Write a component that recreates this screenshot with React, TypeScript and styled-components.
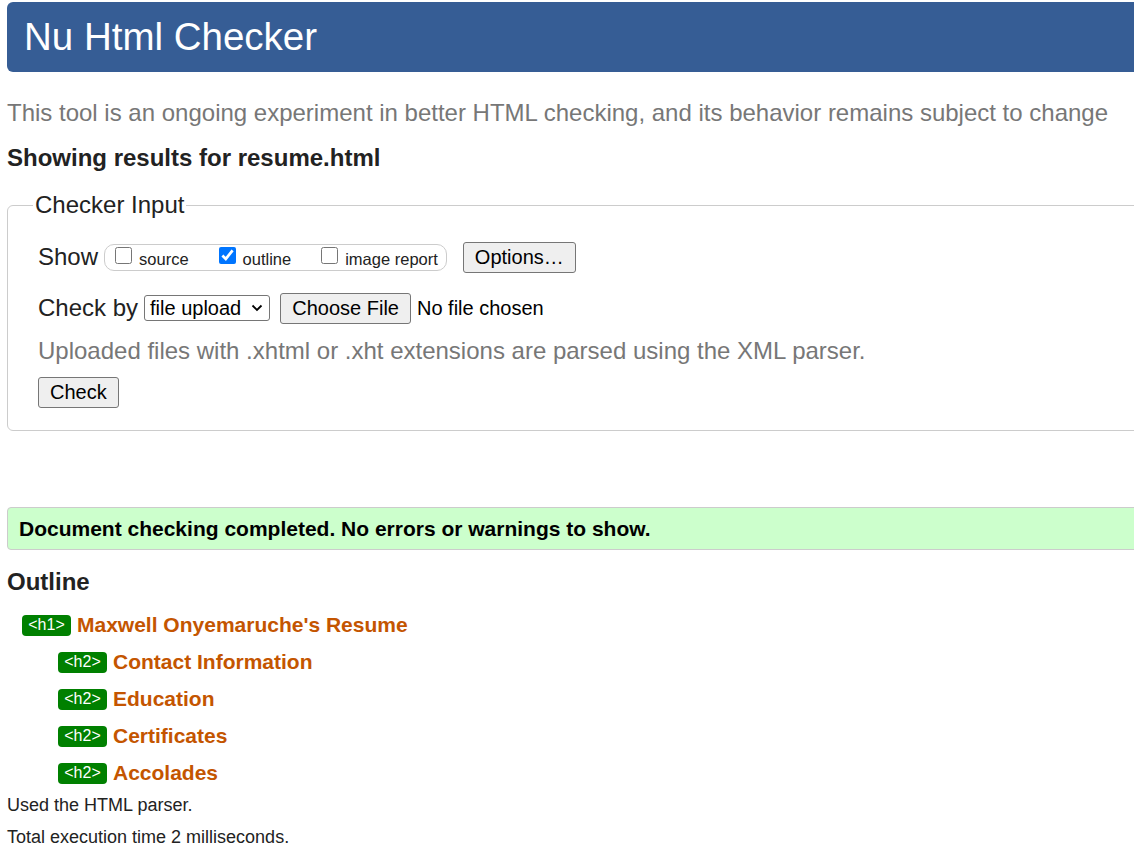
import React from "react";
import styled, { createGlobalStyle } from "styled-components";

const Global = createGlobalStyle`
  html, body { margin: 0; padding: 0; overflow: hidden; background: #fff; }
  body { font-family: "Liberation Sans", Arial, sans-serif; color: #222; }
`;

const Page = styled.div`
  width: 1200px;
  padding: 2px 0 0 7px;
`;

const Banner = styled.h1`
  margin: 0;
  height: 70px;
  display: flex;
  align-items: center;
  padding: 0 17px;
  background: #365d95;
  color: #fff;
  font-size: 38.5px;
  font-weight: normal;
  border-radius: 6px;
`;

const Intro = styled.p`
  margin: 26px 0 0;
  font-size: 24px;
  color: #777;
  line-height: 30px;
  white-space: nowrap;
`;

const Heading = styled.h2<{ $mt: number }>`
  margin: ${(p) => p.$mt}px 0 0;
  font-size: 24px;
  line-height: 30px;
  font-weight: bold;
  color: #222;
`;

const Fieldset = styled.fieldset`
  margin: 19px 0 0;
  padding: 23px 30px 22px;
  border: 1px solid #ccc;
  border-radius: 6px;
  min-width: 0;
`;

const Legend = styled.legend`
  font-size: 24px;
  padding: 0 2px;
  margin-left: -5px;
  color: #222;
  line-height: 26px;
`;

const Row = styled.div<{ $mt?: number }>`
  display: flex;
  align-items: center;
  gap: 6px;
  margin-top: ${(p) => p.$mt ?? 0}px;
  font-size: 24px;
  color: #222;
  min-height: 32px;
`;

const CheckGroup = styled.div`
  display: flex;
  align-items: center;
  height: 25px;
  border: 1px solid #ccc;
  border-radius: 10px;
  padding: 0 8px 0 10px;
  margin-right: 10px;
  gap: 30px;
`;

const CheckLabel = styled.label`
  display: flex;
  align-items: center;
  font-size: 16.5px;
  color: #222;
  position: relative;
  top: 2px;
`;

const Box = styled.input`
  margin: 0 7px 0 0;
  width: 17px;
  height: 17px;
  position: relative;
  top: -4px;
`;

const Button = styled.button<{ $ml?: number }>`
  font-family: "Liberation Sans", Arial, sans-serif;
  font-size: 20px;
  color: #000;
  background: #efefef;
  border: 1px solid #767676;
  border-radius: 3px;
  height: 31px;
  padding: 0 11px;
  margin-left: ${(p) => p.$ml ?? 0}px;
`;

const Select = styled.div`
  display: flex;
  align-items: center;
  gap: 10px;
  height: 24px;
  padding: 0 6px 0 5px;
  border: 1px solid #767676;
  border-radius: 3px;
  font-size: 20px;
  color: #000;
`;

const NoFile = styled.span`
  font-size: 20px;
  color: #000;
`;

const Hint = styled.p`
  margin: 12px 0 0;
  font-size: 24px;
  color: #777;
  line-height: 30px;
  white-space: nowrap;
`;

const CheckRow = styled.div`
  margin-top: 11px;
`;

const Success = styled.div`
  margin-top: 76px;
  height: 41px;
  display: flex;
  align-items: center;
  padding: 0 11px;
  background: #ccffcc;
  border: 1px solid #ccc;
  border-radius: 4px;
  font-size: 21px;
  font-weight: bold;
  color: #000;
`;

const OutlineList = styled.div`
  margin-top: 16px;
  display: flex;
  flex-direction: column;
  gap: 13px;
`;

const OutlineItem = styled.div<{ $level: number }>`
  display: flex;
  align-items: center;
  gap: 6px;
  padding-left: ${(p) => (p.$level === 1 ? 15 : 51)}px;
  height: 24px;
`;

const Badge = styled.span`
  display: inline-flex;
  align-items: center;
  justify-content: center;
  background: #008000;
  color: #fff;
  font-size: 16px;
  height: 21px;
  width: 49px;
  border-radius: 4px;
`;

const HeadingText = styled.span`
  color: #c45500;
  font-size: 21px;
  font-weight: bold;
`;

const Footnote = styled.p<{ $mt: number }>`
  margin: ${(p) => p.$mt}px 0 0;
  font-size: 18px;
  line-height: 20px;
  color: #222;
`;

const Chevron = () => (
  <svg width="12" height="8" viewBox="0 0 12 8">
    <path d="M1.5 1.5 L6 6 L10.5 1.5" fill="none" stroke="#000" strokeWidth="1.8" />
  </svg>
);

const outline = [
  { level: 1, text: "Maxwell Onyemaruche's Resume" },
  { level: 2, text: "Contact Information" },
  { level: 2, text: "Education" },
  { level: 2, text: "Certificates" },
  { level: 2, text: "Accolades" },
];

export default function App() {
  return (
    <Page>
      <Global />
      <Banner>Nu Html Checker</Banner>
      <Intro>
        This tool is an ongoing experiment in better HTML checking, and its behavior remains subject to change
      </Intro>
      <Heading $mt={15}>Showing results for resume.html</Heading>
      <Fieldset>
        <Legend>Checker Input</Legend>
        <Row>
          <span>Show</span>
          <CheckGroup>
            <CheckLabel>
              <Box type="checkbox" />
              source
            </CheckLabel>
            <CheckLabel>
              <Box type="checkbox" defaultChecked />
              outline
            </CheckLabel>
            <CheckLabel>
              <Box type="checkbox" />
              image report
            </CheckLabel>
          </CheckGroup>
          <Button>Options…</Button>
        </Row>
        <Row $mt={19}>
          <span>Check by</span>
          <Select>
            file upload <Chevron />
          </Select>
          <Button $ml={4}>Choose File</Button>
          <NoFile>No file chosen</NoFile>
        </Row>
        <Hint>Uploaded files with .xhtml or .xht extensions are parsed using the XML parser.</Hint>
        <CheckRow>
          <Button>Check</Button>
        </CheckRow>
      </Fieldset>
      <Success>Document checking completed. No errors or warnings to show.</Success>
      <Heading $mt={17}>Outline</Heading>
      <OutlineList>
        {outline.map((o) => (
          <OutlineItem key={o.text} $level={o.level}>
            <Badge>&lt;h{o.level}&gt;</Badge>
            <HeadingText>{o.text}</HeadingText>
          </OutlineItem>
        ))}
      </OutlineList>
      <Footnote $mt={10}>Used the HTML parser.</Footnote>
      <Footnote $mt={12}>Total execution time 2 milliseconds.</Footnote>
    </Page>
  );
}
